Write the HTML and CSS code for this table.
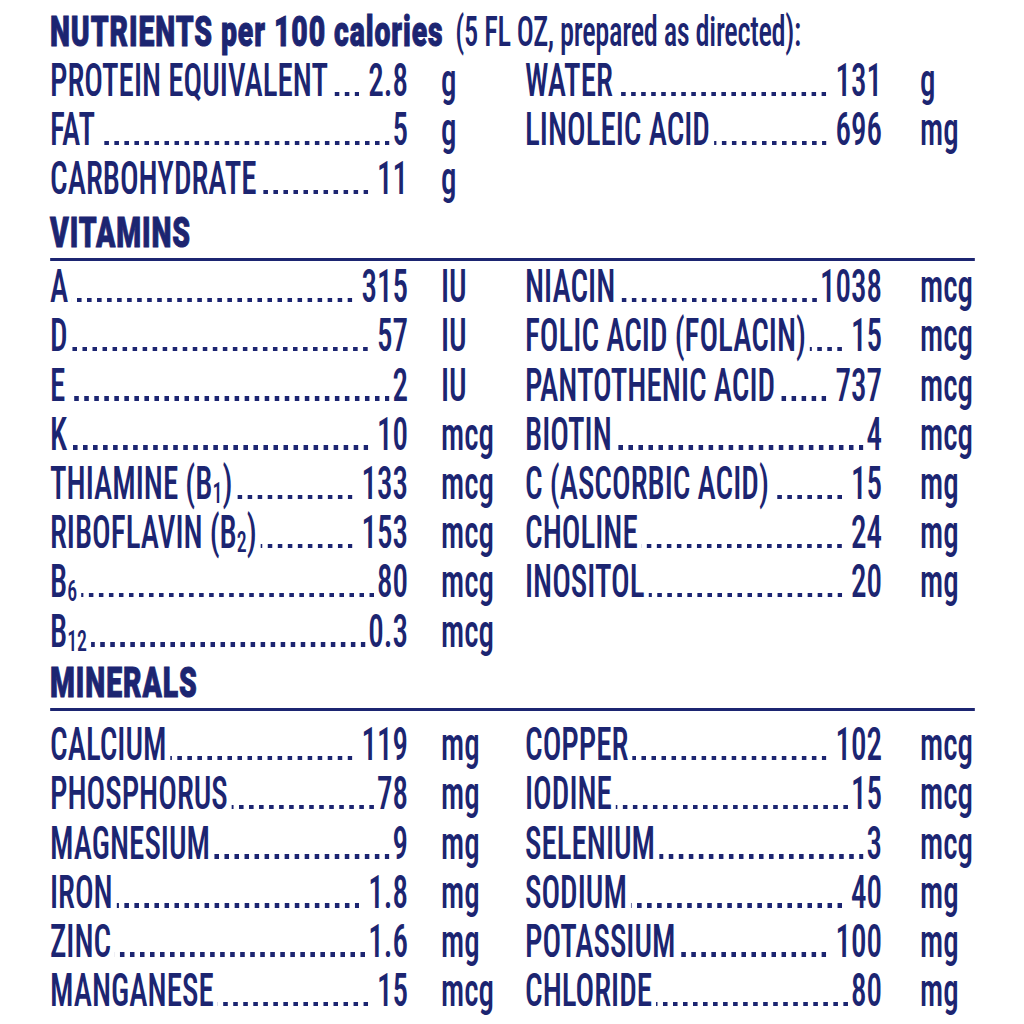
FILE: index.html
```
<!DOCTYPE html>
<html>
<head>
<meta charset="utf-8">
<link rel="stylesheet" href="styles.css">
</head>
<body>
<div class="page">
<div class="sheet">
  <div class="title"><b>NUTRIENTS per 100 calories</b> <span>(5 FL OZ, prepared as directed):</span></div>

  <div class="grid top">
    <div class="e"><span class="n">PROTEIN EQUIVALENT</span><span class="d"></span><span class="v sp">2.8</span></div><div class="u">g</div>
    <div class="e"><span class="n">WATER</span><span class="d"></span><span class="v sp">131</span></div><div class="u">g</div>
    <div class="e"><span class="n">FAT</span><span class="d"></span><span class="v">5</span></div><div class="u">g</div>
    <div class="e"><span class="n">LINOLEIC ACID</span><span class="d"></span><span class="v sp">696</span></div><div class="u">mg</div>
    <div class="e"><span class="n">CARBOHYDRATE</span><span class="d"></span><span class="v sp">11</span></div><div class="u">g</div>
    <div class="e"></div><div class="u"></div>
  </div>

  <div class="head vit">VITAMINS</div>
  <div class="grid">
    <div class="e"><span class="n">A</span><span class="d"></span><span class="v sp">315</span></div><div class="u">IU</div>
    <div class="e"><span class="n">NIACIN</span><span class="d"></span><span class="v">1038</span></div><div class="u">mcg</div>
    <div class="e"><span class="n">D</span><span class="d"></span><span class="v sp">57</span></div><div class="u">IU</div>
    <div class="e"><span class="n">FOLIC ACID (FOLACIN)</span><span class="d"></span><span class="v sp">15</span></div><div class="u">mcg</div>
    <div class="e"><span class="n">E</span><span class="d"></span><span class="v">2</span></div><div class="u">IU</div>
    <div class="e"><span class="n">PANTOTHENIC ACID</span><span class="d"></span><span class="v sp">737</span></div><div class="u">mcg</div>
    <div class="e"><span class="n">K</span><span class="d"></span><span class="v sp">10</span></div><div class="u">mcg</div>
    <div class="e"><span class="n">BIOTIN</span><span class="d"></span><span class="v">4</span></div><div class="u">mcg</div>
    <div class="e"><span class="n">THIAMINE (B<sub>1</sub>)</span><span class="d"></span><span class="v sp">133</span></div><div class="u">mcg</div>
    <div class="e"><span class="n">C (ASCORBIC ACID)</span><span class="d"></span><span class="v sp">15</span></div><div class="u">mg</div>
    <div class="e"><span class="n">RIBOFLAVIN (B<sub>2</sub>)</span><span class="d"></span><span class="v sp">153</span></div><div class="u">mcg</div>
    <div class="e"><span class="n">CHOLINE</span><span class="d"></span><span class="v sp">24</span></div><div class="u">mg</div>
    <div class="e"><span class="n">B<sub>6</sub></span><span class="d"></span><span class="v">80</span></div><div class="u">mcg</div>
    <div class="e"><span class="n">INOSITOL</span><span class="d"></span><span class="v sp">20</span></div><div class="u">mg</div>
    <div class="e"><span class="n">B<sub>12</sub></span><span class="d"></span><span class="v">0.3</span></div><div class="u">mcg</div>
    <div class="e"></div><div class="u"></div>
  </div>

  <div class="head min">MINERALS</div>
  <div class="grid minr">
    <div class="e"><span class="n">CALCIUM</span><span class="d"></span><span class="v sp">119</span></div><div class="u">mg</div>
    <div class="e"><span class="n">COPPER</span><span class="d"></span><span class="v sp">102</span></div><div class="u">mcg</div>
    <div class="e"><span class="n">PHOSPHORUS</span><span class="d"></span><span class="v">78</span></div><div class="u">mg</div>
    <div class="e"><span class="n">IODINE</span><span class="d"></span><span class="v">15</span></div><div class="u">mcg</div>
    <div class="e"><span class="n">MAGNESIUM</span><span class="d"></span><span class="v">9</span></div><div class="u">mg</div>
    <div class="e"><span class="n">SELENIUM</span><span class="d"></span><span class="v">3</span></div><div class="u">mcg</div>
    <div class="e"><span class="n">IRON</span><span class="d"></span><span class="v sp">1.8</span></div><div class="u">mg</div>
    <div class="e"><span class="n">SODIUM</span><span class="d"></span><span class="v sp">40</span></div><div class="u">mg</div>
    <div class="e"><span class="n">ZINC</span><span class="d"></span><span class="v">1.6</span></div><div class="u">mg</div>
    <div class="e"><span class="n">POTASSIUM</span><span class="d"></span><span class="v sp">100</span></div><div class="u">mg</div>
    <div class="e"><span class="n">MANGANESE</span><span class="d"></span><span class="v sp">15</span></div><div class="u">mcg</div>
    <div class="e"><span class="n">CHLORIDE</span><span class="d"></span><span class="v">80</span></div><div class="u">mg</div>
  </div>
</div>
</div>
</body>
</html>
```
FILE: styles.css
```
html, body {
  margin: 0;
  padding: 0;
  background: #ffffff;
  overflow: hidden;
}

.page {
  width: 1024px;
  height: 1024px;
  overflow: hidden;
}

/* The label is set in a very condensed face: the sheet is laid out at
   1/0.66 of its width and squeezed horizontally. */
.sheet {
  width: 1401.5px;
  padding: 7px 0 0 75.76px;
  transform: scaleX(0.66);
  transform-origin: 0 0;
  color: #1c2571;
  font-family: Roboto, "Liberation Sans", sans-serif;
  font-stretch: 75%;
}

.title {
  font-size: 43px;
  line-height: 48px;
  white-space: nowrap;
}
.title b {
  font-weight: 900;
  font-stretch: 100%;
  letter-spacing: 1.4px;
  -webkit-text-stroke: 1px #1c2571;
}
.title span {
  font-weight: 480;
  margin-left: 8px;
  letter-spacing: -0.5px;
}

.grid {
  display: grid;
  grid-template-columns: 542.4px 177.3px 540.9px 140.9px;
  grid-auto-rows: 49.2px;
  font-size: 47px;
  line-height: 49.2px;
  font-weight: 480;
}

.e {
  display: flex;
  align-items: baseline;
  white-space: nowrap;
}
.n {
  flex: none;
}
.d {
  flex: 1;
  height: 4.5px;
  margin-left: 6px;
  background-image: linear-gradient(to right, transparent 0 8.4px, #1c2571 8.4px);
  background-size: 15.2px 100%;
  background-repeat: repeat-x;
  background-position: right 0 bottom 0;
}
.v {
  flex: none;
  margin-left: 4.5px;
}
.v.sp {
  margin-left: 13.6px;
}
.u {
  white-space: nowrap;
}
.grid .u:nth-child(4n+2) {
  padding-left: 50px;
}
.grid .u:nth-child(4n) {
  padding-left: 57.6px;
}

sub {
  font-size: 0.64em;
  line-height: 0;
  vertical-align: -4px;
}

.head {
  font-size: 43px;
  line-height: 48px;
  font-weight: 900;
  font-stretch: 100%;
  letter-spacing: 1.4px;
  -webkit-text-stroke: 1px #1c2571;
  border-bottom: 3px solid #1c2571;
}
.head.vit {
  margin-top: 5.7px;
  padding-bottom: 2px;
}
.head.min {
  margin-top: 3.4px;
  padding-bottom: 1.5px;
}
.grid.minr {
  margin-top: 8.55px;
}
```
